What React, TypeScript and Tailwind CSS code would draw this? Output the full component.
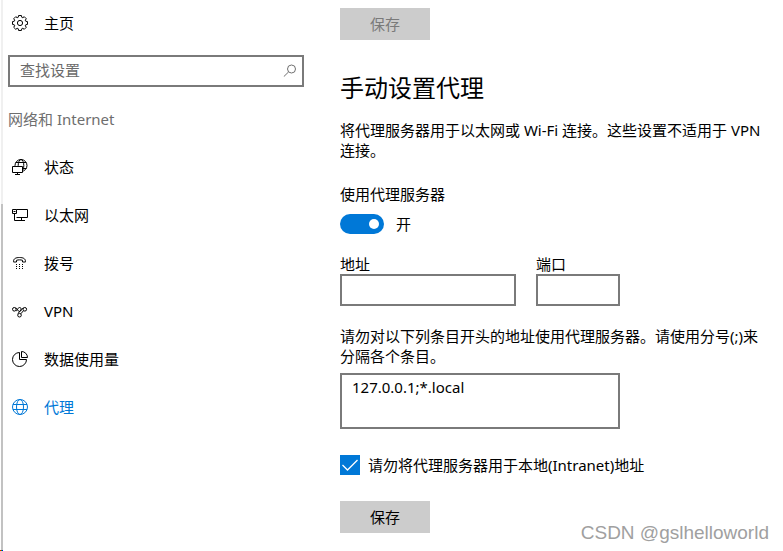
import type { ReactNode } from "react";

function Svg({ children }: { children: ReactNode }) {
  return (
    <svg
      viewBox="0 0 16 16"
      className="w-4 h-4 shrink-0"
      fill="none"
      stroke="currentColor"
      strokeWidth="1"
      aria-hidden="true"
    >
      {children}
    </svg>
  );
}

// eight evenly spaced teeth around the centre of the 16px box
const GEAR_POINTS = Array.from({ length: 8 }, (_, i) =>
  [
    [-17, 6],
    [-11, 7.6],
    [11, 7.6],
    [17, 6],
  ]
    .map(([deg, r]) => {
      const a = ((i * 45 + deg) * Math.PI) / 180;
      return `${(8 + r * Math.cos(a)).toFixed(2)},${(8 + r * Math.sin(a)).toFixed(2)}`;
    })
    .join(" ")
).join(" ");

function GearIcon() {
  return (
    <Svg>
      <polygon points={GEAR_POINTS} />
      <circle cx="8" cy="8" r="2.6" />
    </Svg>
  );
}

function StatusIcon() {
  return (
    <Svg>
      <circle cx="9" cy="6.5" r="6" />
      <ellipse cx="9" cy="6.5" rx="2.8" ry="6" />
      <path d="M3.7 3.5h10.6M3.5 9.5h11" />
      <path d="M.5 7.5h10v6H.5z" fill="white" />
      <path d="M5.500 13.500v2M3 15.500h5" />
    </Svg>
  );
}

function EthernetIcon() {
  return (
    <Svg>
      <path d="M4.500 2.500h11v8h-11" />
      <path d="M.5 2.500h4v4h-4zM1.500 4.500h2M2.500 6.500v7M9.500 10.500v3M2.500 13.500H13" />
    </Svg>
  );
}

function DialUpIcon() {
  return (
    <Svg>
      <path d="M1.5 6.5C1.5 3.5 4 2.5 7.5 2.5s6 1 6 4v.5H10.5V5.300C8.500 4.700 6.500 4.700 4.500 5.300V7h-3z" />
      <path d="M4 9.500h1M7 9.500h1M10 9.500h1M4 11.500h1M7 11.500h1M10 11.500h1M4 13.500h1M7 13.500h1M10 13.500h1" />
    </Svg>
  );
}

function VpnIcon() {
  return (
    <Svg>
      <circle cx="2.300" cy="6.300" r="1.800" />
      <circle cx="12.800" cy="6.300" r="1.800" />
      <circle cx="7.500" cy="12.200" r="1.800" />
      <path d="M3.500 5C5 4.500 5.500 8.500 7.500 8.500S9.500 5 11.500 5M3.800 7.500C5.500 8.500 5.500 4.500 7.500 4.500c2 0 2 2 .5 3.500l-2 2.500M11.500 7.700L8.800 10.800" />
    </Svg>
  );
}

function DataUsageIcon() {
  return (
    <Svg>
      <path d="M7.500 1.500a7 7 0 1 0 7 7h-7z" />
      <path d="M9.500.5v6h6a6 6 0 0 0-6-6z" />
    </Svg>
  );
}

function GlobeIcon() {
  return (
    <Svg>
      <circle cx="8" cy="8" r="7.500" />
      <ellipse cx="8" cy="8" rx="3.500" ry="7.500" />
      <path d="M1 5.500h14M1 10.500h14" />
    </Svg>
  );
}

const NAV_ITEMS = [
  { label: "状态", Icon: StatusIcon },
  { label: "以太网", Icon: EthernetIcon },
  { label: "拨号", Icon: DialUpIcon },
  { label: "VPN", Icon: VpnIcon },
  { label: "数据使用量", Icon: DataUsageIcon },
  { label: "代理", Icon: GlobeIcon, active: true },
];

function Sidebar() {
  return (
    <aside className="w-[301px] shrink-0 pl-[5px]">
      <a href="#home" className="flex h-[46px] items-center gap-4 pl-1">
        <GearIcon />
        主页
      </a>
      <div className="relative mt-[9px]">
        <input
          type="search"
          aria-label="查找设置"
          placeholder="查找设置"
          className="block h-8 w-full border-2 border-[#7a7a7a] bg-white px-[10px] pb-[2px] outline-none placeholder:text-[#6a6a6a]"
        />
        <svg
          viewBox="0 0 14 14"
          className="absolute right-2 top-2 h-[14px] w-[14px] text-[#707070]"
          fill="none"
          stroke="currentColor"
          aria-hidden="true"
        >
          <circle cx="9.500" cy="6" r="4" />
          <path d="M6.500 9L1.800 13.600" />
        </svg>
      </div>
      <h2 className="flex h-16 items-center text-[#6e6e6e]">网络和 Internet</h2>
      <nav className="-mt-2">
        {NAV_ITEMS.map(({ label, Icon, active }) => (
          <a
            key={label}
            href="#"
            aria-current={active ? "page" : undefined}
            className={`flex h-12 items-center gap-4 pl-1 ${active ? "text-[#0078d7]" : ""}`}
          >
            <Icon />
            {label}
          </a>
        ))}
      </nav>
    </aside>
  );
}

function ProxySettings() {
  return (
    <main className="min-w-0 flex-1 pl-9 pr-3 pt-2">
      <button
        type="button"
        disabled
        className="block h-8 w-[90px] bg-[#cccccc] text-[#7a7a7a]"
      >
        保存
      </button>

      <h1 className="mt-8 text-2xl">手动设置代理</h1>
      <p className="mt-4">
        将代理服务器用于以太网或 Wi-Fi 连接。这些设置不适用于 VPN 连接。
      </p>

      <p id="use-proxy" className="mt-6">
        使用代理服务器
      </p>
      <div className="mt-[10px] flex items-center gap-3">
        <button
          type="button"
          role="switch"
          aria-checked="true"
          aria-labelledby="use-proxy"
          className="flex h-5 w-11 items-center justify-end rounded-full bg-[#0078d7] pr-[5px]"
        >
          <span className="h-[10px] w-[10px] rounded-full bg-white" />
        </button>
        <span>开</span>
      </div>

      <div className="mt-5 flex gap-5">
        <div>
          <label htmlFor="address" className="block">
            地址
          </label>
          <input
            id="address"
            type="text"
            className="block h-8 w-44 border-2 border-[#7a7a7a] px-[10px] outline-none"
          />
        </div>
        <div>
          <label htmlFor="port" className="block">
            端口
          </label>
          <input
            id="port"
            type="text"
            className="block h-8 w-[84px] border-2 border-[#7a7a7a] px-[10px] outline-none"
          />
        </div>
      </div>

      <label htmlFor="exceptions" className="mt-5 block">
        请勿对以下列条目开头的地址使用代理服务器。请使用分号(;)来分隔各个条目。
      </label>
      <textarea
        id="exceptions"
        defaultValue="127.0.0.1;*.local"
        className="mt-[7px] block h-14 w-[280px] resize-none border-2 border-[#7a7a7a] px-[10px] py-[2px] outline-none"
      />

      <label className="mt-[26px] flex items-center gap-2">
        <span className="relative h-5 w-5">
          <input
            type="checkbox"
            defaultChecked
            className="block h-5 w-5 appearance-none bg-[#0078d7]"
          />
          <svg
            viewBox="0 0 20 20"
            className="pointer-events-none absolute inset-0 h-5 w-5"
            fill="none"
            stroke="white"
            strokeWidth="1.300"
            aria-hidden="true"
          >
            <path d="M2.500 10l5 5L17.500 5" />
          </svg>
        </span>
        请勿将代理服务器用于本地(Intranet)地址
      </label>

      <button type="button" className="mt-[26px] block h-8 w-[90px] bg-[#cccccc]">
        保存
      </button>
    </main>
  );
}

export default function App() {
  return (
    <div className="relative flex min-h-screen bg-white font-['Noto_Sans','Noto_Sans_CJK_SC',sans-serif] text-[15px] leading-5 text-black">
      <div className="ml-px flex w-[2px] shrink-0 flex-col">
        <div className="h-[204px] bg-[#f0f0f0]" />
        <div className="flex-1 bg-[#c2c2c2]" />
      </div>
      <Sidebar />
      <ProxySettings />
      <div className="absolute bottom-0 left-0 flex h-px">
        <span className="w-px bg-[#ff0000]" />
        <span className="w-px bg-[#00c000]" />
        <span className="w-px bg-[#0000ff]" />
      </div>
      <div className="absolute bottom-2 right-[14px] font-['Liberation_Sans',sans-serif] text-[19px] text-[#a0a0a0]">
        CSDN @gslhelloworld
      </div>
    </div>
  );
}
